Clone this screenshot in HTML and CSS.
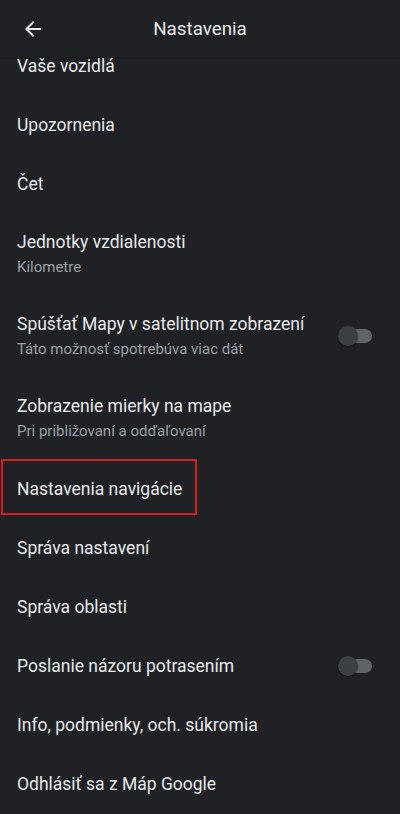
FILE: index.html
```html
<!DOCTYPE html>
<html>
<head>
<meta charset="utf-8">
<link rel="stylesheet" href="styles.css">
</head>
<body>
<div class="screen">
  <header class="topbar">
    <svg class="back" width="24" height="24" viewBox="0 0 24 24"><path d="M20 11H7.83l5.59-5.59L12 4l-8 8 8 8 1.41-1.41L7.83 13H20v-2z" fill="#e8eaed"/></svg>
    <div class="title">Nastavenia</div>
  </header>
  <div class="list">
    <div class="item"><div class="t">Vaše vozidlá</div></div>
    <div class="item"><div class="t">Upozornenia</div></div>
    <div class="item"><div class="t">Čet</div></div>
    <div class="item two"><div class="t">Jednotky vzdialenosti</div><div class="s">Kilometre</div></div>
    <div class="item two sw"><div class="txt"><div class="t">Spúšťať Mapy v satelitnom zobrazení</div><div class="s">Táto možnosť spotrebúva viac dát</div></div><div class="toggle"><span class="knob"></span></div></div>
    <div class="item two"><div class="t">Zobrazenie mierky na mape</div><div class="s">Pri približovaní a odďaľovaní</div></div>
    <div class="item mark"><div class="t">Nastavenia navigácie</div><div class="redbox"></div></div>
    <div class="item"><div class="t">Správa nastavení</div></div>
    <div class="item"><div class="t">Správa oblasti</div></div>
    <div class="item sw"><div class="t">Poslanie názoru potrasením</div><div class="toggle"><span class="knob"></span></div></div>
    <div class="item"><div class="t">Info, podmienky, och. súkromia</div></div>
    <div class="item"><div class="t">Odhlásiť sa z Máp Google</div></div>
  </div>
</div>
</body>
</html>
```

FILE: styles.css
```css
html, body {
  margin: 0;
  padding: 0;
  background: #202124;
}
body {
  font-family: Roboto, "Noto Sans", sans-serif;
  color: #e8eaed;
}
.screen {
  width: 400px;
  height: 814px;
  overflow: hidden;
  background: #202124;
}
.topbar {
  position: relative;
  z-index: 2;
  height: 57px;
  display: flex;
  align-items: center;
  justify-content: center;
  background: #202124;
  box-shadow: 0 1px 2px rgba(0,0,0,0.25);
}
.back {
  position: absolute;
  left: 21px;
  top: 17px;
}
.title {
  font-size: 18.8px;
  color: #e8eaed;
}
.list {
  margin-top: -21px;
}
.item {
  position: relative;
  display: flex;
  align-items: center;
  justify-content: space-between;
  height: 59px;
  padding: 0 17px;
  box-sizing: border-box;
}
.item.two {
  flex-direction: column;
  align-items: flex-start;
  justify-content: flex-start;
  height: 82px;
  padding-top: 19px;
}
.item.two.sw {
  flex-direction: row;
  align-items: center;
  justify-content: space-between;
  padding-top: 0;
}
.t {
  font-size: 17.5px;
  line-height: 20px;
  color: #e8eaed;
}
.s {
  font-size: 15px;
  line-height: 20px;
  margin-top: 5px;
  color: #9aa0a6;
}
.toggle {
  position: relative;
  flex: none;
  width: 32px;
  height: 14px;
  border-radius: 7px;
  background: #5f6368;
  margin-right: 11px;
}
.knob {
  position: absolute;
  left: -2px;
  top: -3px;
  width: 20px;
  height: 20px;
  border-radius: 50%;
  background: #3c4043;
  box-shadow: 0 1px 2px rgba(0,0,0,0.4);
}
.redbox {
  position: absolute;
  left: 1px;
  top: 0;
  width: 196px;
  height: 56px;
  box-sizing: border-box;
  border: 2px solid #d21f26;
}
```
